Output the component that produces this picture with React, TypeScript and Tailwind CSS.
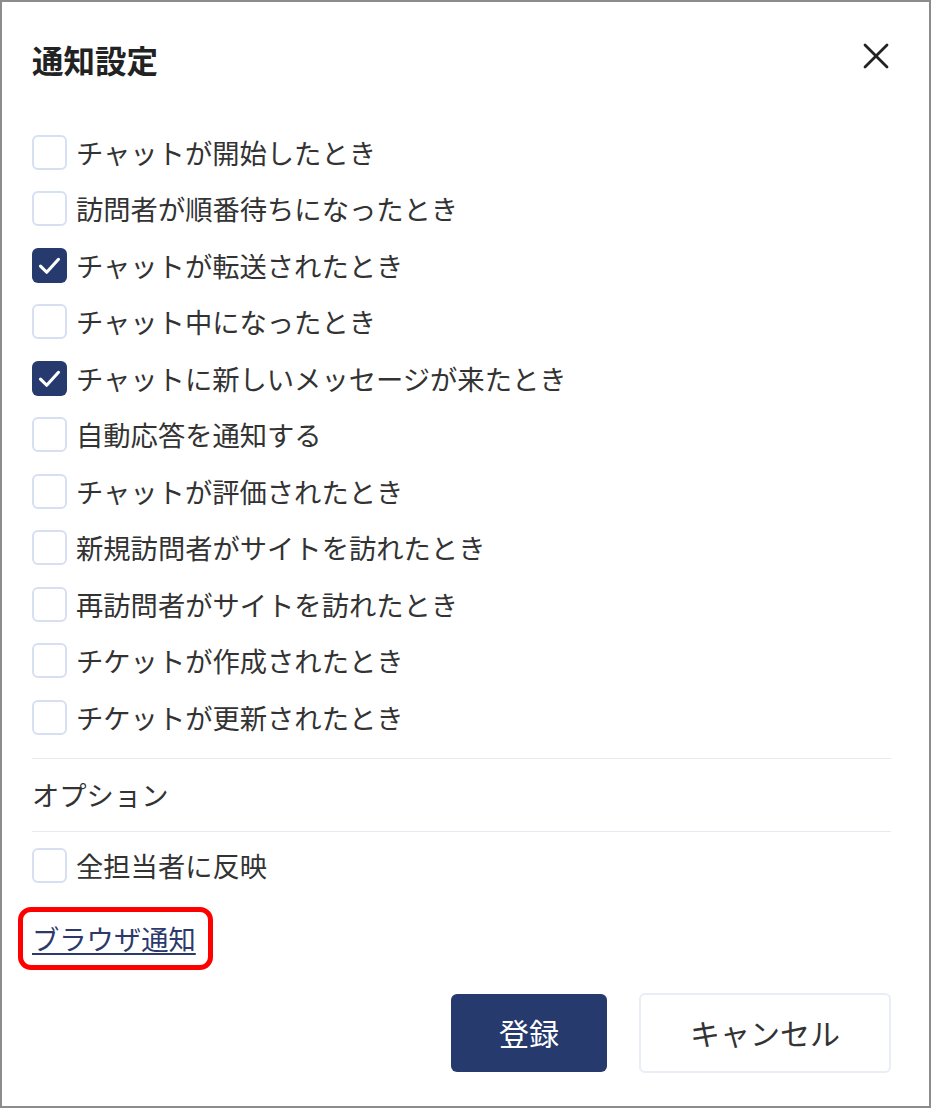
import React from 'react';

const items: { label: string; checked: boolean }[] = [
  { label: 'チャットが開始したとき', checked: false },
  { label: '訪問者が順番待ちになったとき', checked: false },
  { label: 'チャットが転送されたとき', checked: true },
  { label: 'チャット中になったとき', checked: false },
  { label: 'チャットに新しいメッセージが来たとき', checked: true },
  { label: '自動応答を通知する', checked: false },
  { label: 'チャットが評価されたとき', checked: false },
  { label: '新規訪問者がサイトを訪れたとき', checked: false },
  { label: '再訪問者がサイトを訪れたとき', checked: false },
  { label: 'チケットが作成されたとき', checked: false },
  { label: 'チケットが更新されたとき', checked: false },
];

function Checkbox({ checked }: { checked: boolean }) {
  if (checked) {
    return (
      <span className="w-[35px] h-[35px] shrink-0 rounded-[6px] bg-[#263a6d] flex items-center justify-center">
        <svg width="27" height="27" viewBox="0 0 24 24" fill="none" stroke="white" strokeWidth="2.8" strokeLinecap="round" strokeLinejoin="round">
          <polyline points="4 12.5 9.5 18 20 6.5" />
        </svg>
      </span>
    );
  }
  return <span className="w-[35px] h-[35px] shrink-0 rounded-[6px] border-2 border-[#d6e0f2] bg-white" />;
}

export default function App() {
  return (
    <div
      className="w-[931px] h-[1108px] border-2 border-[#8c8c8c] bg-white pl-[30px] pr-[38px] text-[#333]"
      style={{ fontFamily: '"Noto Sans CJK JP", "Noto Sans", sans-serif' }}
    >
      {/* Header */}
      <div className="pt-[36px] flex items-center justify-between h-[78px]">
        <h2 className="text-[31.5px] leading-[40px] font-bold text-[#222]">通知設定</h2>
        <svg width="28" height="28" viewBox="0 0 28 28" className="mr-[1px] -mt-[6px]" stroke="#222" strokeWidth="2.8" strokeLinecap="round">
          <line x1="3" y1="3" x2="25" y2="25" />
          <line x1="25" y1="3" x2="3" y2="25" />
        </svg>
      </div>

      {/* Notification options */}
      <div className="mt-[44px] flex flex-col">
        {items.map((item) => (
          <label key={item.label} className="h-[56.5px] flex items-center gap-[9px]">
            <Checkbox checked={item.checked} />
            <span className="text-[27.3px] leading-none">{item.label}</span>
          </label>
        ))}
      </div>

      <div className="mt-[12px] border-t border-[#e6e9ef]" />
      <div className="h-[72px] flex items-center text-[27.3px]">オプション</div>
      <div className="border-t border-[#e6e9ef]" />

      <label className="h-[68px] flex items-center gap-[9px]">
        <Checkbox checked={false} />
        <span className="text-[27.3px] leading-none">全担当者に反映</span>
      </label>

      {/* Browser notification link */}
      <div className="mt-[20px] h-[36px] flex items-center">
        <span className="relative inline-block">
          <a href="#" className="text-[27.3px] leading-[36px] text-[#2b3a6b] underline underline-offset-[3px] decoration-[1.5px]">
            ブラウザ通知
          </a>
          <span className="absolute -left-[14px] -right-[17px] -top-[13px] -bottom-[14px] border-[5px] border-[#ff0000] rounded-[13px] pointer-events-none" />
        </span>
      </div>

      {/* Buttons */}
      <div className="mt-[37px] flex justify-end items-center gap-[32px]">
        <button className="w-[156px] h-[78px] rounded-[6px] bg-[#263a6d] text-white text-[30px]">登録</button>
        <button className="w-[252px] h-[80px] rounded-[6px] border-2 border-[#e8edf6] bg-white text-[#333] text-[30px]">キャンセル</button>
      </div>
    </div>
  );
}
